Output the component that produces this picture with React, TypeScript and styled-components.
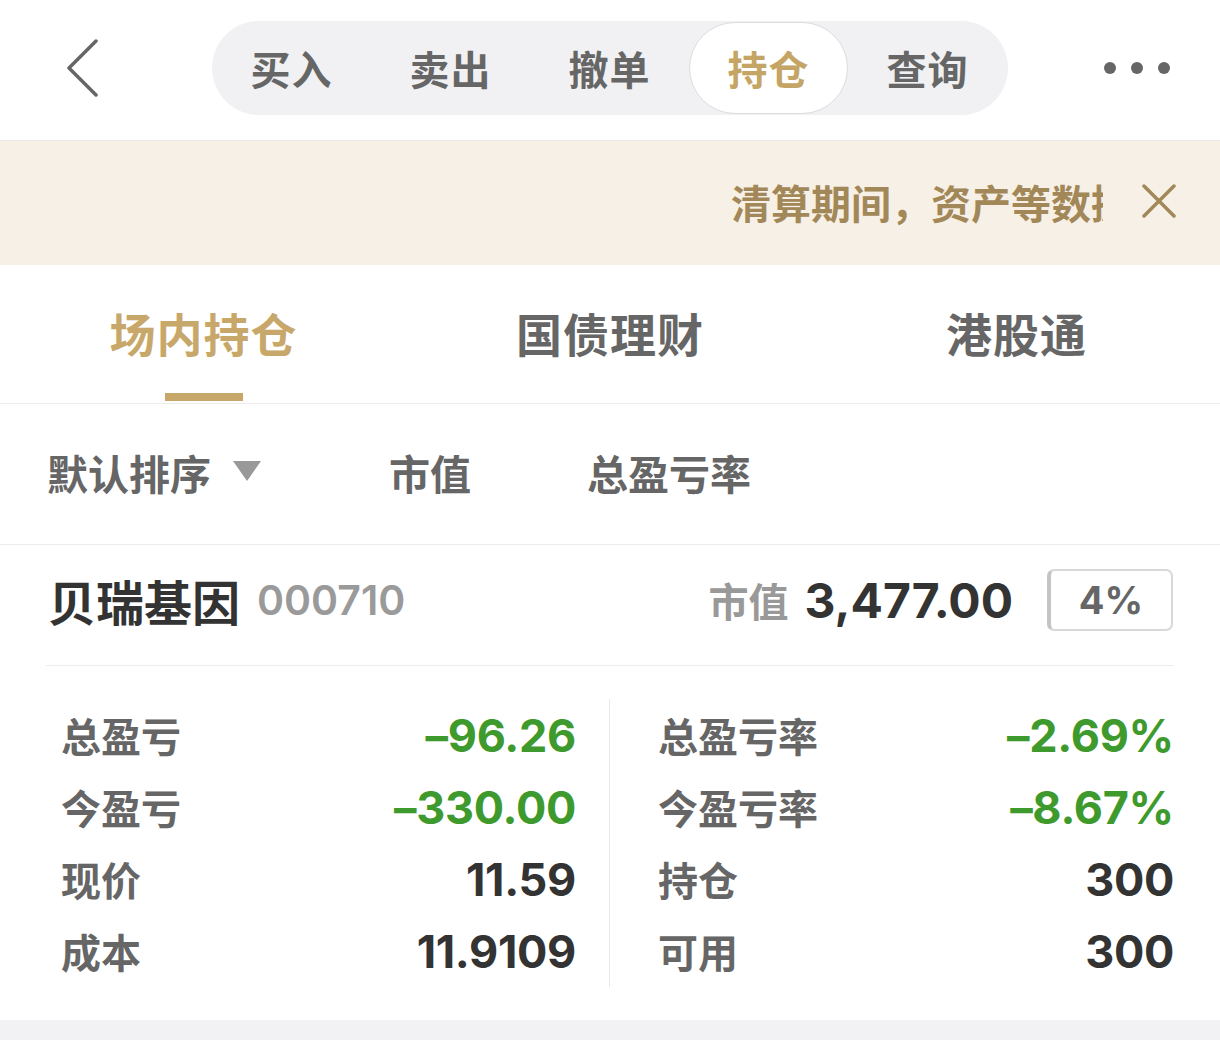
import React from "react";
import styled, { createGlobalStyle } from "styled-components";

const Global = createGlobalStyle`
  html, body { margin: 0; padding: 0; background: #fff; }
  body { font-family: "Noto Sans CJK SC", "Noto Sans", sans-serif; }
  * { box-sizing: border-box; }
`;

const NUM = `"Inter", "Noto Sans", "Noto Sans CJK SC", sans-serif`;

const Page = styled.div`
  width: 1220px;
  height: 1040px;
  background: #fff;
  display: flex;
  flex-direction: column;
  overflow: hidden;
  font-family: "Noto Sans CJK SC", "Noto Sans", sans-serif;
`;

const Header = styled.div`
  height: 141px;
  flex: none;
  display: flex;
  align-items: center;
  border-bottom: 1px solid #ececec;
  padding: 0 50px 0 64px;
`;

const BackBtn = styled.div`
  width: 40px;
  height: 60px;
  display: flex;
  align-items: center;
  margin-top: -4px;
`;

const Segment = styled.div`
  margin-left: 108px;
  margin-top: -4px;
  width: 796px;
  height: 94px;
  border-radius: 47px;
  background: #f1f1f3;
  display: flex;
  align-items: center;
`;

const SegItem = styled.div<{ $active?: boolean }>`
  width: 159px;
  height: 92px;
  border-radius: 46px;
  display: flex;
  align-items: center;
  justify-content: center;
  font-size: 40px;
  font-weight: 700;
  color: ${(p) => (p.$active ? "#c5a565" : "#666")};
  background: ${(p) => (p.$active ? "#fff" : "transparent")};
  border: ${(p) => (p.$active ? "1px solid #dcdcdc" : "1px solid transparent")};
  letter-spacing: 1px;
`;

const More = styled.div`
  margin-left: auto;
  display: flex;
  gap: 15px;
  margin-top: -4px;
`;

const Dot = styled.span`
  width: 12px;
  height: 12px;
  border-radius: 50%;
  background: #666;
`;

const Banner = styled.div`
  height: 124px;
  flex: none;
  background: #f7f0e6;
  display: flex;
  align-items: center;
  padding-left: 731px;
  padding-right: 44px;
`;

const BannerText = styled.div`
  width: 372px;
  overflow: hidden;
  white-space: nowrap;
  font-size: 40px;
  font-weight: 700;
  color: #a28858;
  margin-top: -2px;
`;

const CloseBtn = styled.div`
  margin-left: auto;
  width: 34px;
  height: 34px;
  display: flex;
  align-items: center;
  justify-content: center;
  margin-top: -4px;
`;

const Tabs = styled.div`
  height: 139px;
  flex: none;
  display: grid;
  grid-template-columns: 407px 406px 407px;
  border-bottom: 1px solid #ececec;
`;

const Tab = styled.div<{ $active?: boolean }>`
  position: relative;
  display: flex;
  align-items: center;
  justify-content: center;
  font-size: 46px;
  font-weight: 700;
  color: ${(p) => (p.$active ? "#c8a86a" : "#666")};
  padding-bottom: 4px;
  letter-spacing: 1px;
`;

const TabBar = styled.span`
  position: absolute;
  bottom: 2px;
  left: 50%;
  transform: translateX(-50%);
  width: 78px;
  height: 8px;
  background: #c8a86a;
`;

const SortBar = styled.div`
  height: 141px;
  flex: none;
  display: flex;
  align-items: center;
  padding-left: 47px;
  border-bottom: 1px solid #ececec;
`;

const SortItem = styled.div<{ $offset?: number }>`
  display: flex;
  align-items: center;
  font-size: 41px;
  font-weight: 700;
  color: #666;
  margin-left: ${(p) => p.$offset ?? 0}px;
  margin-top: -4px;
`;

const Tri = styled.span`
  margin-left: 22px;
  width: 0;
  height: 0;
  border-left: 14px solid transparent;
  border-right: 14px solid transparent;
  border-top: 20px solid #999;
  margin-top: -2px;
`;

const Card = styled.div`
  padding: 0 46px;
  flex: 1;
  display: flex;
  flex-direction: column;
`;

const StockHead = styled.div`
  height: 121px;
  display: flex;
  align-items: center;
  border-bottom: 1px solid #ececec;
  padding-bottom: 10px;
`;

const StockName = styled.span`
  font-size: 48px;
  font-weight: 700;
  color: #333;
  margin-left: 2px;
`;

const StockCode = styled.span`
  font-family: ${NUM};
  font-size: 41px;
  font-weight: 600;
  color: #9a9a9a;
  margin-left: 17px;
`;

const MvLabel = styled.span`
  margin-left: auto;
  font-size: 40px;
  font-weight: 700;
  color: #999;
`;

const MvValue = styled.span`
  font-family: ${NUM};
  font-size: 48px;
  font-weight: 700;
  color: #333;
  margin-left: 16px;
`;

const Badge = styled.div`
  margin-left: 34px;
  width: 126px;
  height: 62px;
  border: 2px solid #d8d8d8;
  border-left: 4px solid #c4c4c4;
  border-radius: 7px;
  display: flex;
  align-items: center;
  justify-content: center;
  font-family: ${NUM};
  font-size: 38px;
  font-weight: 700;
  color: #666;
  margin-right: 1px;
`;

const Grid = styled.div`
  display: grid;
  grid-template-columns: 1fr 1fr;
  padding: 33px 0 31px;
`;

const Col = styled.div<{ $left?: boolean }>`
  display: flex;
  flex-direction: column;
  padding: ${(p) => (p.$left ? "0 33px 0 15px" : "0 0 0 48px")};
  border-right: ${(p) => (p.$left ? "1px solid #e8e8e8" : "none")};
`;

const Row = styled.div`
  height: 72px;
  display: flex;
  align-items: center;
  justify-content: space-between;
`;

const Label = styled.span`
  font-size: 40px;
  font-weight: 700;
  color: #666;
`;

const Value = styled.span<{ $green?: boolean }>`
  font-family: ${NUM};
  font-size: 45px;
  font-weight: 700;
  letter-spacing: -0.3px;
  color: ${(p) => (p.$green ? "#3e9a2c" : "#333")};
`;

const Footer = styled.div`
  height: 20px;
  flex: none;
  background: #f2f2f4;
`;

const left = [
  { l: "总盈亏", v: "–96.26", g: true },
  { l: "今盈亏", v: "–330.00", g: true },
  { l: "现价", v: "11.59" },
  { l: "成本", v: "11.9109" },
];
const right = [
  { l: "总盈亏率", v: "–2.69%", g: true },
  { l: "今盈亏率", v: "–8.67%", g: true },
  { l: "持仓", v: "300" },
  { l: "可用", v: "300" },
];

export default function App() {
  return (
    <Page>
      <Global />
      <Header>
        <BackBtn>
          <svg width="36" height="58" viewBox="0 0 36 58">
            <polyline points="32,2 5,29 32,56" fill="none" stroke="#666" strokeWidth="3.5" strokeLinecap="round" strokeLinejoin="round" />
          </svg>
        </BackBtn>
        <Segment>
          <SegItem>买入</SegItem>
          <SegItem>卖出</SegItem>
          <SegItem>撤单</SegItem>
          <SegItem $active>持仓</SegItem>
          <SegItem>查询</SegItem>
        </Segment>
        <More>
          <Dot />
          <Dot />
          <Dot />
        </More>
      </Header>
      <Banner>
        <BannerText>清算期间，资产等数据可能存在误差</BannerText>
        <CloseBtn>
          <svg width="34" height="34" viewBox="0 0 34 34">
            <path d="M2 2 L32 32 M32 2 L2 32" stroke="#a28858" strokeWidth="3.5" strokeLinecap="round" />
          </svg>
        </CloseBtn>
      </Banner>
      <Tabs>
        <Tab $active>
          场内持仓
          <TabBar />
        </Tab>
        <Tab>国债理财</Tab>
        <Tab>港股通</Tab>
      </Tabs>
      <SortBar>
        <SortItem>
          默认排序
          <Tri />
        </SortItem>
        <SortItem $offset={128}>市值</SortItem>
        <SortItem $offset={116}>总盈亏率</SortItem>
      </SortBar>
      <Card>
        <StockHead>
          <StockName>贝瑞基因</StockName>
          <StockCode>000710</StockCode>
          <MvLabel>市值</MvLabel>
          <MvValue>3,477.00</MvValue>
          <Badge>4%</Badge>
        </StockHead>
        <Grid>
          <Col $left>
            {left.map((r) => (
              <Row key={r.l}>
                <Label>{r.l}</Label>
                <Value $green={r.g}>{r.v}</Value>
              </Row>
            ))}
          </Col>
          <Col>
            {right.map((r) => (
              <Row key={r.l}>
                <Label>{r.l}</Label>
                <Value $green={r.g}>{r.v}</Value>
              </Row>
            ))}
          </Col>
        </Grid>
      </Card>
      <Footer />
    </Page>
  );
}
